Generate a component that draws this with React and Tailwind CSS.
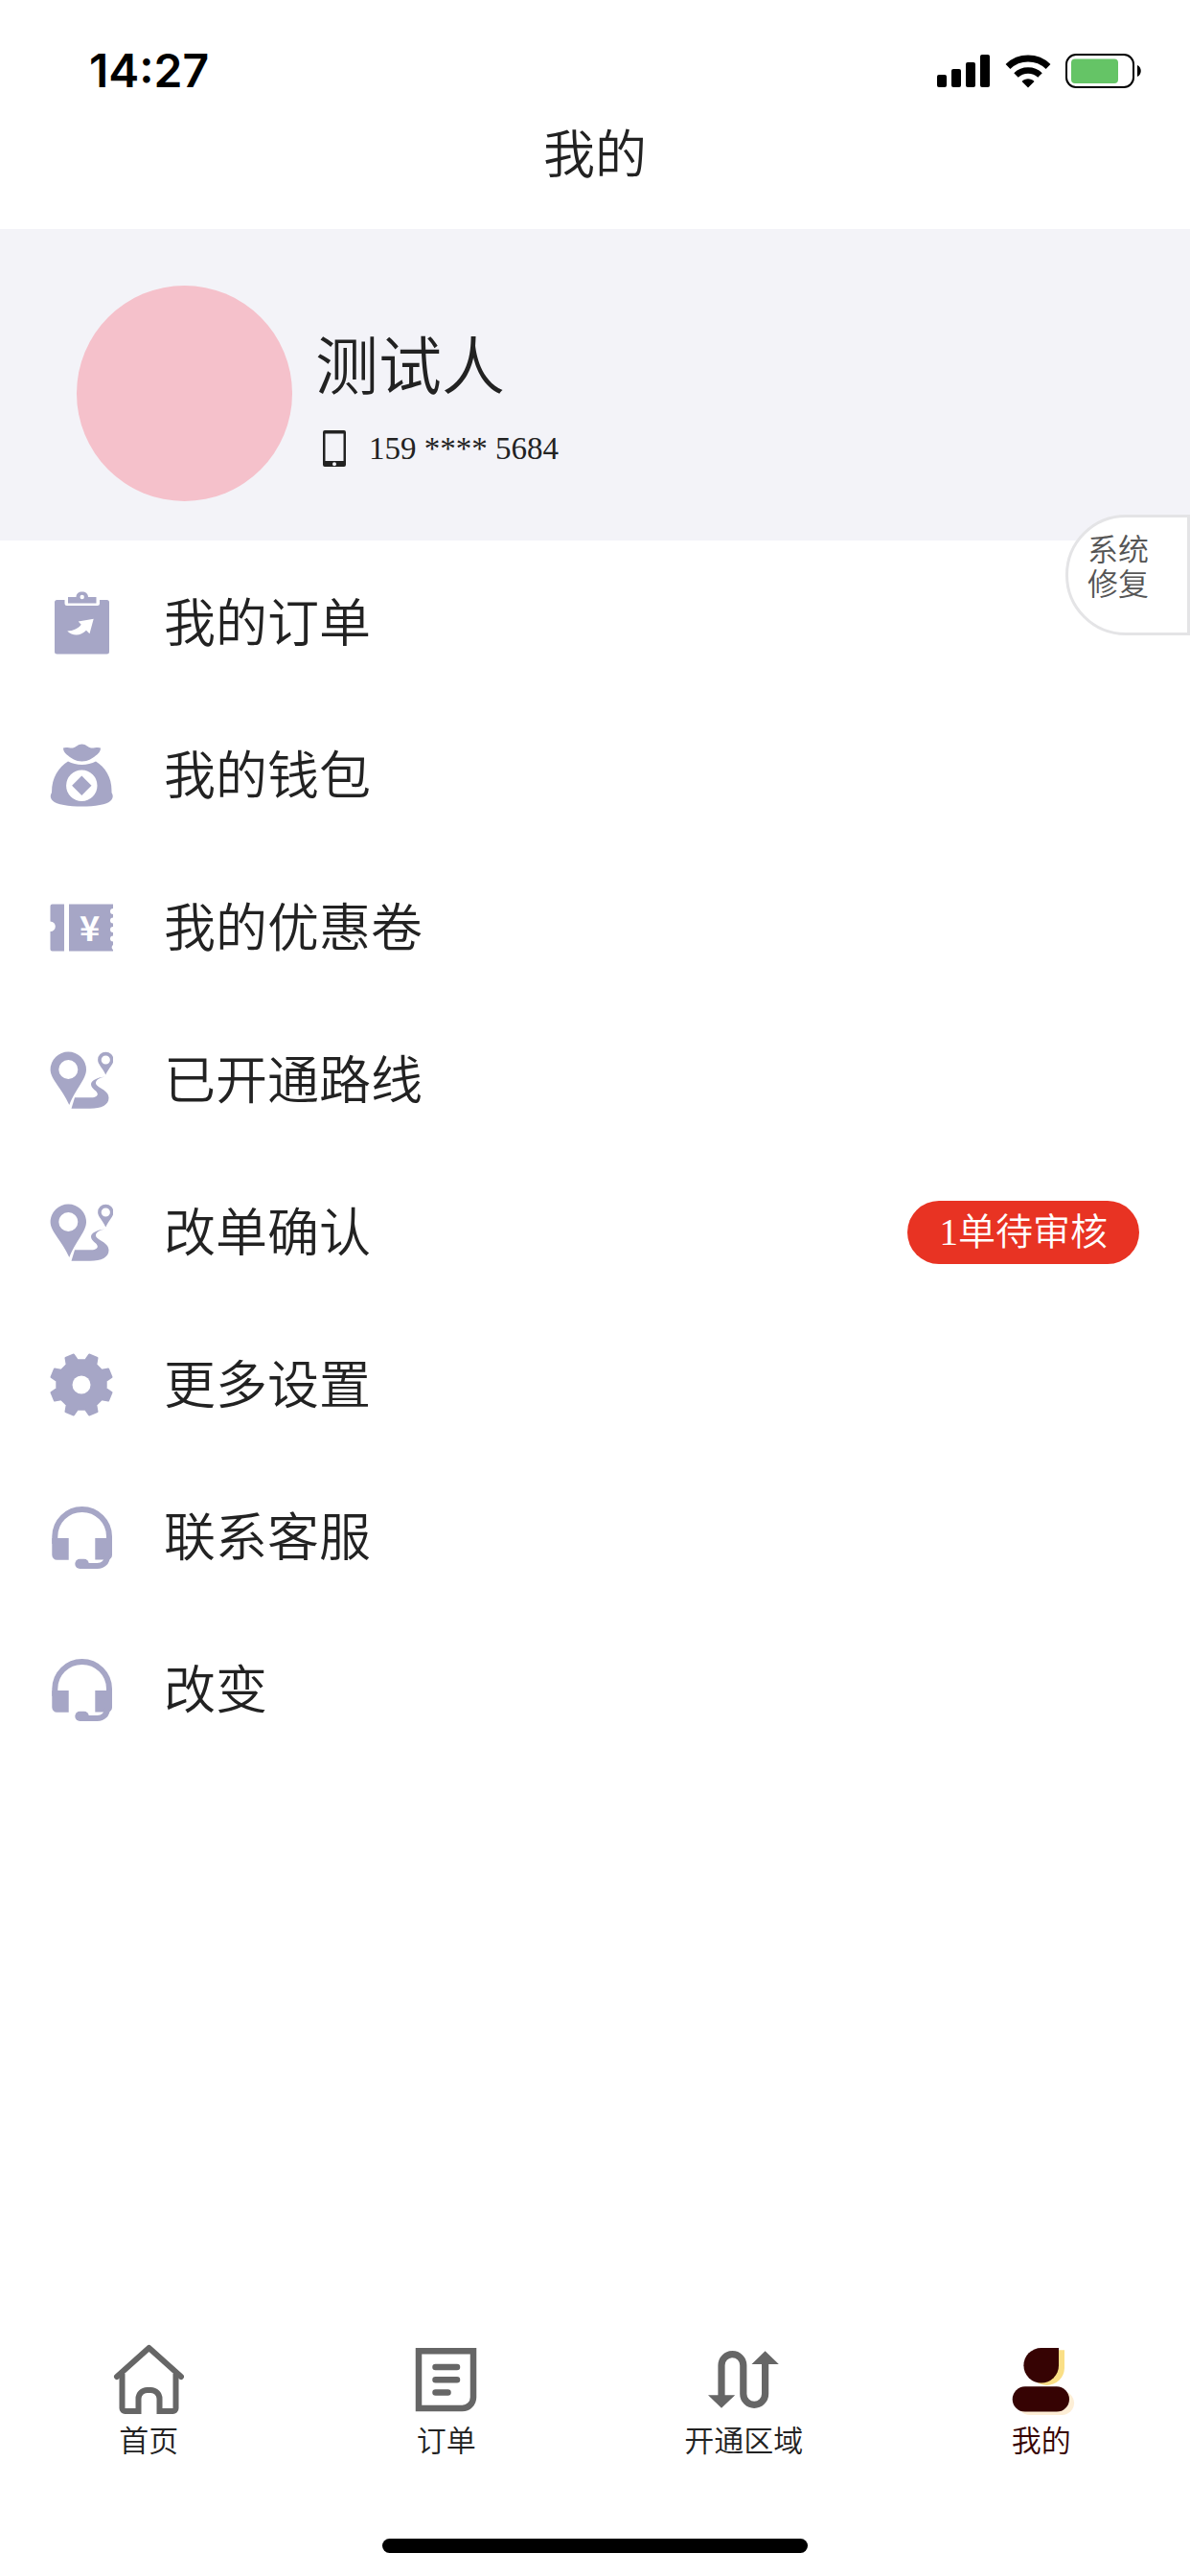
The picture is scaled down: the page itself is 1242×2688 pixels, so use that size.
import { useState } from 'react';

function SignalIcon() {
  return (
    <svg width="56" height="36" viewBox="0 0 56 36" aria-hidden="true">
      <rect x="0" y="22" width="10" height="13" rx="2" />
      <rect x="15" y="16" width="10" height="19" rx="2" />
      <rect x="30" y="9" width="10" height="26" rx="2" />
      <rect x="45" y="1" width="10" height="34" rx="2" />
    </svg>
  );
}

function WifiIcon() {
  return (
    <svg width="48" height="36" viewBox="0 0 48 36" aria-hidden="true">
      <path d="M3 13.5a30.5 30.5 0 0 1 42 0" fill="none" stroke="#000" strokeWidth="7" />
      <path d="M11.5 22.5a18 18 0 0 1 25 0" fill="none" stroke="#000" strokeWidth="6.5" />
      <path d="M17.5 29c3.500-3.600 9.500-3.600 13 0L24 35.500z" />
    </svg>
  );
}

function BatteryIcon() {
  return (
    <svg width="80" height="38" viewBox="0 0 80 38" aria-hidden="true">
      <rect x="1" y="2" width="70" height="34" rx="10" fill="none" stroke="#000" strokeWidth="2" />
      <rect x="6" y="6.500" width="49" height="25.500" rx="4" fill="#65c466" />
      <path d="M75 13c5 2 5 10 0 12z" />
    </svg>
  );
}

function PhoneIcon() {
  return (
    <svg width="24" height="38" viewBox="0 0 24 38" aria-hidden="true">
      <path
        fillRule="evenodd"
        d="M2 0h20a2 2 0 0 1 2 2v34a2 2 0 0 1-2 2H2a2 2 0 0 1-2-2V2a2 2 0 0 1 2-2zm.5 3.500v28.500h19V3.500zm9.500 29.700a2 2 0 1 0 0 4 2 2 0 0 0 0-4z"
        fill="#222"
      />
    </svg>
  );
}

function ClipboardIcon() {
  return (
    <svg width="66" height="66" viewBox="0 0 66 66" fill="#a6a6c6" aria-hidden="true">
      <path d="M7.500 9H15.500v3.500a2.500 2.500 0 0 0 2.500 2.500H49.500a2.500 2.500 0 0 0 2.500-2.500V9H59.500a2.500 2.500 0 0 1 2.500 2.500V63a2.500 2.500 0 0 1-2.500 2.500H7.500A2.500 2.500 0 0 1 5 63V11.500A2.500 2.500 0 0 1 7.500 9z" />
      <path
        fillRule="evenodd"
        d="M19 6h8.500c0-3.500 2.500-5.500 6.200-5.500S40 2.500 40 6h8.500v6.500H19zM33.700 3.800a2.200 2.200 0 1 0 0 4.400 2.200 2.200 0 0 0 0-4.400z"
      />
      <path d="M45.700 28.700L29.700 31.500l3 3.200c-3 4-8 6.500-14.500 6.800 5.500 5.500 14 5.500 19.800-.700l3.500 3.500z" fill="#fff" />
    </svg>
  );
}

function WalletIcon() {
  return (
    <svg width="66" height="66" viewBox="0 0 66 66" fill="#a6a6c6" aria-hidden="true">
      <path d="M14 4.500c3.500-1.500 7 .5 10 0C28 3.500 29 .5 33.500.5S39 3.500 43 4.500c3 .5 6.500-1.500 10 0 0 5.500-5.500 8.500-11 12-4.500 2.500-12.500 2.500-17 0-5.500-3.500-11-6.500-11-12z" />
      <path
        fillRule="evenodd"
        d="M19 18.500c8.500 4.500 20.500 4.500 29 0C58 25 65 35 64.500 51c2 3 1.500 6.500-1 8.500-7 8-53 8-60.500 0C.5 57.500 0 54 2 51 2 35 9 25 19 18.500zM33.300 27.500a16.200 16.200 0 1 0 0 32.400 16.200 16.200 0 0 0 0-32.400z"
      />
      <path d="M33.300 33.500L43.500 43.700 33.300 53.900 23.100 43.700z" />
    </svg>
  );
}

function CouponIcon() {
  return (
    <svg width="66" height="66" viewBox="0 0 66 66" fill="#a6a6c6" aria-hidden="true">
      <path d="M2.500 8.500H15V57.500H2.500A2 2 0 0 1 .5 55.500V37a5.300 5.300 0 0 0 0-10.600V10.500a2 2 0 0 1 2-2z" />
      <path d="M20 8.500H66V13a3 3 0 0 0 0 6v3.500a3 3 0 0 0 0 6V32a3 3 0 0 0 0 6v3.500a3 3 0 0 0 0 6V51a3 3 0 0 0 0 5v1.500H20z" />
      <text x="41.500" y="47" textAnchor="middle" fill="#fff" className="font-['Noto_Sans_CJK_SC',sans-serif] text-[36px] font-bold">¥</text>
    </svg>
  );
}

function RouteIcon() {
  return (
    <svg width="66" height="66" viewBox="0 0 66 66" fill="#a6a6c6" aria-hidden="true">
      <path
        fillRule="evenodd"
        d="M19.300 3.500A18.700 18.700 0 0 1 38 22.200C38 32 27 42 20.300 59 13 42 .600 32 .600 22.200A18.700 18.700 0 0 1 19.300 3.500zm0 8.500a10 10 0 1 0 0 20 10 10 0 0 0 0-20z"
      />
      <path
        fillRule="evenodd"
        d="M58.300 3.700a8.200 8.200 0 0 1 8.200 8.200c0 4.600-5.200 8.600-8.200 15.600-3-7-8.200-11-8.200-15.600a8.200 8.200 0 0 1 8.200-8.200zm0 3.700a4.600 4.600 0 1 0 0 9.200 4.600 4.600 0 0 0 0-9.200z"
      />
      <path d="M57.500 29.500C49 30.500 43 33.500 43 37.500C43 42 49.500 44 49.800 47.500C50 50.500 46 51.300 42 51.300H26L22.500 62.800H42C54 62.800 61.500 59 61.500 51.500C61.500 43 48.500 41 48 36.500C47.700 33 52 30.500 57.500 29.500z" />
    </svg>
  );
}

// eight teeth, the first one half a step off the vertical
const gearPoints = Array.from({ length: 8 }, (_, k) => 22.5 + 45 * k)
  .flatMap((a) => [
    [26, a - 13.5],
    [32.5, a - 8],
    [32.5, a + 8],
    [26, a + 13.5],
  ])
  .map(([r, deg]) => {
    const rad = (deg * Math.PI) / 180;
    return `${(33 + r * Math.sin(rad)).toFixed(1)},${(33 - r * Math.cos(rad)).toFixed(1)}`;
  })
  .join(' ');

function GearIcon() {
  return (
    <svg width="66" height="66" viewBox="0 0 66 66" fill="#a6a6c6" aria-hidden="true">
      <polygon points={gearPoints} stroke="#a6a6c6" strokeWidth="2" strokeLinejoin="round" />
      <circle cx="33" cy="33" r="9.500" fill="#fff" />
    </svg>
  );
}

function HeadsetIcon() {
  return (
    <svg width="66" height="66" viewBox="0 0 66 66" fill="#a6a6c6" aria-hidden="true">
      <path d="M5.300 40V32.300a28.300 28.300 0 0 1 56.700 0V40" fill="none" stroke="#a6a6c6" strokeWidth="6" />
      <path d="M2.300 34H19.700V56.700H7.500a5.200 5.200 0 0 1-5.200-5.200z" />
      <path d="M47.300 34H65V51.500c0 3-2 4.500-4 5H47.300z" />
      <path d="M60 53c-.5 6-4 10-10.500 10H36" fill="none" stroke="#a6a6c6" strokeWidth="6" />
      <rect x="26.300" y="55.700" width="14.500" height="10.300" rx="5.100" />
    </svg>
  );
}

function HomeIcon() {
  return (
    <svg width="74" height="74" viewBox="0 0 74 74" fill="none" stroke="#666" strokeWidth="6" strokeLinecap="round" strokeLinejoin="round" aria-hidden="true">
      <path d="M4 34L37.500 4 71 34" />
      <path d="M9.500 31V67a3 3 0 0 0 3 3H26.500V57a9 9 0 0 1 9-9h4a9 9 0 0 1 9 9V70H62.500a3 3 0 0 0 3-3V31" strokeLinecap="butt" strokeLinejoin="miter" />
    </svg>
  );
}

function OrderIcon() {
  return (
    <svg width="74" height="74" viewBox="0 0 74 74" fill="none" stroke="#666" strokeWidth="6.500" strokeLinecap="round" aria-hidden="true">
      <path d="M8 7.300H65V55.500a11.500 11.500 0 0 1-11.500 11.500H8z" />
      <path d="M25.500 24H48M25.500 37.300H48M25.500 50.500H38.500" />
    </svg>
  );
}

function AreaIcon() {
  return (
    <svg width="74" height="74" viewBox="0 0 74 74" fill="#666" aria-hidden="true">
      <path d="M14 56V22a11.400 11.400 0 0 1 22.800 0V52a11.400 11.400 0 0 0 22.800 0V18" fill="none" stroke="#666" strokeWidth="7.200" />
      <path d="M0 53.300H28.200L14 66.800zM45.500 21H73.800L59.600 7.300z" />
    </svg>
  );
}

function MineIcon() {
  return (
    <svg width="74" height="74" viewBox="0 0 74 74" aria-hidden="true">
      <path d="M42.700 6.300H61V25a18.300 18.300 0 1 1-18.300-18.700z" fill="#fadf86" />
      <rect x="12" y="49" width="59" height="25" rx="12.500" fill="#fdeed6" />
      <path d="M36.700 4H55V22.300A18.300 18.300 0 1 1 36.700 4z" fill="#360303" />
      <rect x="6.700" y="44.300" width="59.300" height="26.300" rx="13.100" fill="#360303" />
    </svg>
  );
}

const menu = [
  { label: '我的订单', Icon: ClipboardIcon },
  { label: '我的钱包', Icon: WalletIcon },
  { label: '我的优惠卷', Icon: CouponIcon },
  { label: '已开通路线', Icon: RouteIcon },
  { label: '改单确认', Icon: RouteIcon, badge: '1单待审核' },
  { label: '更多设置', Icon: GearIcon },
  { label: '联系客服', Icon: HeadsetIcon },
  { label: '改变', Icon: HeadsetIcon },
];

const tabs = [
  { label: '首页', Icon: HomeIcon },
  { label: '订单', Icon: OrderIcon },
  { label: '开通区域', Icon: AreaIcon },
  { label: '我的', Icon: MineIcon },
];

export default function App() {
  const [active, setActive] = useState('我的');

  return (
    <div className="flex min-h-screen flex-col bg-white font-['Liberation_Serif','Noto_Sans_CJK_SC_DemiLight','Noto_Sans_CJK_SC',serif] text-[#222]">
      <header className="pb-5">
        <div className="flex items-center justify-between pt-11 pr-[50px] pl-[93px] text-black">
          <span className="font-[Inter,sans-serif] text-[48px] leading-[60px] font-semibold">14:27</span>
          <div className="flex items-center gap-[15px]">
            <SignalIcon />
            <WifiIcon />
            <BatteryIcon />
          </div>
        </div>
        <h1 className="pt-1 text-center text-[54px] leading-[111px]">我的</h1>
      </header>

      <section className="relative flex items-start gap-6 bg-[#f3f3f8] pt-[59px] pb-[41px] pl-20">
        <div className="size-[225px] shrink-0 rounded-full bg-[#f5c1cb]"></div>
        <div className="pt-[42px]">
          <h2 className="text-[66px] leading-[88px]">测试人</h2>
          <div className="flex h-[80px] items-center gap-6 pl-2">
            <PhoneIcon />
            <span className="text-[33px] leading-[36px]">159 **** 5684</span>
          </div>
        </div>
        <button className="absolute top-[298px] right-0 h-[126px] w-[130px] cursor-pointer rounded-l-full border-[3px] border-[#e4e4e6] bg-white pr-5 pb-4 text-[32px] leading-[36px] text-[#555]">
          系统
          <br />
          修复
        </button>
      </section>

      <main className="flex flex-col pt-1.5">
        {menu.map(({ label, Icon, badge }) => (
          <button key={label} className="flex h-[159px] w-full cursor-pointer items-center pr-[53px] pl-[52px] text-left">
            <Icon />
            <span className="ml-[53px] pt-1 text-[54px] leading-[66px]">{label}</span>
            {badge && (
              <span className="ml-auto rounded-full bg-[#e83323] px-[33px] text-[39px] leading-[66px] text-white">{badge}</span>
            )}
          </button>
        ))}
      </main>

      <footer className="mt-auto pb-6">
        <nav className="grid grid-cols-4">
          {tabs.map(({ label, Icon }) => (
            <button
              key={label}
              onClick={() => setActive(label)}
              className={`flex cursor-pointer flex-col items-center gap-2 text-[31px] leading-[40px] ${
                active === label ? 'text-[#360303]' : 'text-[#222]'
              }`}
            >
              <Icon />
              <span>{label}</span>
            </button>
          ))}
        </nav>
        <div className="mx-auto mt-[81px] h-[15px] w-[444px] rounded-full bg-black"></div>
      </footer>
    </div>
  );
}
